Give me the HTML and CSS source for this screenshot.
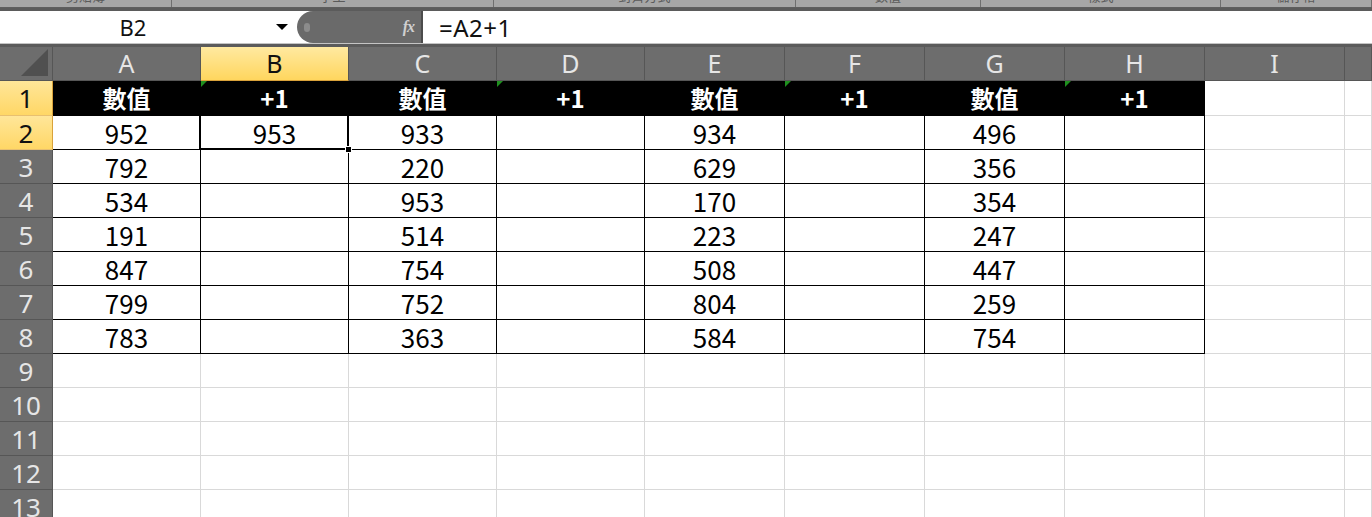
FILE: index.html
```html
<!DOCTYPE html>
<html lang="zh-Hant">
<head>
    <meta charset="UTF-8">
    <meta name="viewport" content="width=device-width, initial-scale=1.0">
    <title>Sheet</title>
    <link rel="stylesheet" href="styles.css">
</head>
<body>
    <div class="ribbon">
        <div class="group"><span>剪貼簿</span></div>
        <div class="group"><span>字型</span></div>
        <div class="group"><span>對齊方式</span></div>
        <div class="group"><span>數值</span></div>
        <div class="group"><span>樣式</span></div>
        <div class="group"><span>儲存格</span></div>
    </div>

    <div class="formula-bar">
        <div class="name-box">
            <span class="name">B2</span>
            <span class="caret"></span>
        </div>
        <div class="fx-pill">
            <span class="grip"></span>
            <span class="fx">fx</span>
        </div>
        <div class="formula">=A2+1</div>
    </div>

    <div class="sheet" id="sheet"></div>

    <script>
        const cols = ['A', 'B', 'C', 'D', 'E', 'F', 'G', 'H', 'I', ''];
        const data = {
            A: [952, 792, 534, 191, 847, 799, 783],
            C: [933, 220, 953, 514, 754, 752, 363],
            E: [934, 629, 170, 223, 508, 804, 584],
            G: [496, 356, 354, 247, 447, 259, 754]
        };
        const sheet = document.getElementById('sheet');

        function add(cls, text) {
            const d = document.createElement('div');
            d.className = cls;
            if (text !== undefined) d.textContent = text;
            sheet.appendChild(d);
        }

        add('corner');
        cols.forEach(c => add('col-head' + (c === 'B' ? ' active' : ''), c));

        for (let r = 1; r <= 13; r++) {
            add('row-head' + (r <= 2 ? ' active' : ''), r);
            cols.forEach((c, i) => {
                let cls = 'cell';
                let text = '';
                if (r <= 8 && i < 8) cls += ' t';
                if (r === 1 && i < 8) {
                    cls += ' h';
                    text = i % 2 ? '+1' : '數值';
                    if (i % 2) cls += ' warn';
                } else if (r <= 8 && data[c]) {
                    text = data[c][r - 2];
                }
                if (c === 'B' && r === 2) {
                    cls += ' sel';
                    text = 953;
                }
                add(cls, text);
            });
        }
    </script>
</body>
</html>
```

FILE: styles.css
```css
body {
    margin: 0;
    font-family: "Noto Sans", "Noto Sans CJK TC", sans-serif;
    background: #fff;
    overflow: hidden;
}

/* ribbon group labels, only their bottoms show */
.ribbon {
    height: 7px;
    background: #a6a6a6;
    border-bottom: 1px solid #5e5e5e;
    display: grid;
    grid-template-columns: 172px 322px 302px 185px 240px 1fr;
    overflow: hidden;
}
.group {
    border-right: 1px solid #6f6f6f;
    display: flex;
    justify-content: center;
    overflow: hidden;
}
.group span {
    font-family: "Noto Sans CJK TC", sans-serif;
    font-size: 13px;
    line-height: 13px;
    color: #5a5a5a;
    margin-top: -11px;
}

.formula-bar {
    display: flex;
    height: 32px;
    padding-top: 3px;
    background: #5b5b5b;
    border-bottom: 1px solid #c4c4c4;
}
.name-box {
    width: 313px;
    background: #fff;
    display: flex;
    align-items: center;
}
.name {
    width: 266px;
    text-align: center;
    font-size: 22px;
    color: #111;
}
.caret {
    margin-left: 10px;
    border-left: 6px solid transparent;
    border-right: 6px solid transparent;
    border-top: 6px solid #000;
}
.fx-pill {
    width: 126px;
    margin-left: -16px;
    box-sizing: border-box;
    background: #6a6a6a;
    border-radius: 16px 0 0 16px;
    border-right: 2px solid #4c4c4c;
    display: flex;
    align-items: center;
    justify-content: space-between;
    padding: 0 7px 0 7px;
}
.grip {
    width: 6px;
    height: 9px;
    border-radius: 3px;
    background: #8c8c8c;
}
.fx {
    font-family: "Liberation Serif", serif;
    font-style: italic;
    font-weight: bold;
    font-size: 16px;
    color: #d0d0d0;
    letter-spacing: -1px;
}
.formula {
    flex: 1;
    background: #fff;
    padding-left: 16px;
    font-size: 24px;
    letter-spacing: 0.5px;
    display: flex;
    align-items: center;
    color: #111;
}

/* grid */
.sheet {
    display: grid;
    grid-template-columns: 53px repeat(4, 148px) repeat(5, 140px) 1fr;
    grid-template-rows: 34px 35px;
    grid-auto-rows: 34px;
    border-top: 3px solid #5b5b5b;
}
.corner,
.col-head,
.row-head {
    background: #6d6d6d;
    color: #e6e6e6;
    border-right: 1px solid #565656;
    border-bottom: 1px solid #565656;
    display: flex;
    align-items: center;
    justify-content: center;
    line-height: 1;
}
.corner {
    position: relative;
}
.corner::after {
    content: '';
    position: absolute;
    right: 4px;
    bottom: 4px;
    border-left: 27px solid transparent;
    border-bottom: 27px solid #505050;
}
.col-head {
    font-size: 25px;
}
.row-head {
    font-size: 26px;
}
.col-head.active {
    background: linear-gradient(#ffe9a0, #ffd65e);
    color: #111;
    border-bottom-color: #d9a23a;
}
.row-head.active {
    background: linear-gradient(#ffe699, #ffd766);
    color: #111;
    border-right-color: #d9a23a;
    border-bottom-color: #e8c070;
}

.cell {
    border-right: 1px solid #d9d9d9;
    border-bottom: 1px solid #d9d9d9;
    display: flex;
    align-items: center;
    justify-content: center;
    font-family: "Noto Sans CJK TC", sans-serif;
    font-size: 26px;
    line-height: 1;
    color: #000;
}
.cell.t {
    border-color: #000;
}
.cell.h {
    background: #000;
    color: #fff;
    font-weight: bold;
    font-size: 24px;
}
.cell.warn {
    position: relative;
}
.cell.warn::before {
    content: '';
    position: absolute;
    top: 0;
    left: 0;
    border-top: 6px solid #1f8f1f;
    border-right: 6px solid transparent;
}
.cell.sel {
    position: relative;
}
.cell.sel::after {
    content: '';
    position: absolute;
    left: -2px;
    top: -2px;
    right: -1px;
    bottom: -1px;
    border: 2px solid #000;
    box-shadow: inset 0 0 0 1px #fff;
}
.cell.sel::before {
    content: '';
    position: absolute;
    right: -4px;
    bottom: -4px;
    width: 5px;
    height: 5px;
    background: #000;
    border: 1px solid #fff;
    z-index: 2;
}
```
